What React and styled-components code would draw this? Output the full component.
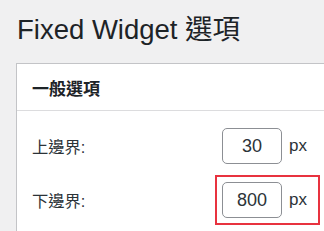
import React from 'react';
import styled, { createGlobalStyle } from 'styled-components';

const GlobalStyle = createGlobalStyle`
  html, body {
    margin: 0;
    padding: 0;
    background: #f0f0f1;
    overflow: hidden;
  }
  body {
    font-family: "Liberation Sans", "Noto Sans CJK TC", sans-serif;
    color: #1d2327;
  }
`;

const Page = styled.div`
  height: 100vh;
  overflow: hidden;
  padding: 12px 0 0 16px;
  box-sizing: border-box;
`;

const Title = styled.h1`
  margin: 0 0 15px 1px;
  font-size: 27.5px;
  font-weight: 400;
  line-height: 36px;
  color: #1d2327;
`;

const Panel = styled.section`
  background: #fff;
  border: 1px solid #c3c4c7;
  border-right: none;
  margin-right: -10px;
`;

const PanelHeader = styled.h2`
  margin: 0;
  height: 46px;
  display: flex;
  align-items: center;
  padding: 0 15px;
  font-size: 17px;
  font-weight: 700;
  border-bottom: 1px solid #dcdcde;
`;

const PanelBody = styled.div`
  display: flex;
  flex-direction: column;
  gap: 18px;
  padding: 17px 15px 0;
  height: 120px;
`;

const Row = styled.div`
  display: grid;
  grid-template-columns: 190px auto;
  align-items: center;
`;

const Label = styled.span`
  font-size: 16.3px;
  color: #2c3338;
`;

const Field = styled.div`
  position: relative;
  display: flex;
  align-items: center;
  gap: 7px;
  width: max-content;
`;

const NumberInput = styled.div`
  width: 58px;
  height: 34px;
  border: 1px solid #8c8f94;
  border-radius: 5px;
  display: flex;
  align-items: center;
  justify-content: center;
  font-size: 18px;
  color: #2c3338;
`;

const Unit = styled.span`
  font-size: 17px;
  color: #2c3338;
`;

const Highlight = styled.div`
  position: absolute;
  top: -7px;
  bottom: -7px;
  left: -7px;
  right: -13px;
  border: 2px solid #e8323f;
`;

const fields = [
  { label: '上邊界:', value: '30' },
  { label: '下邊界:', value: '800', marked: true },
];

export default function App() {
  return (
    <Page>
      <GlobalStyle />
      <Title>Fixed Widget 選項</Title>
      <Panel>
        <PanelHeader>一般選項</PanelHeader>
        <PanelBody>
          {fields.map((f) => (
            <Row key={f.label}>
              <Label>{f.label}</Label>
              <Field>
                <NumberInput>{f.value}</NumberInput>
                <Unit>px</Unit>
                {f.marked && <Highlight />}
              </Field>
            </Row>
          ))}
        </PanelBody>
      </Panel>
    </Page>
  );
}
